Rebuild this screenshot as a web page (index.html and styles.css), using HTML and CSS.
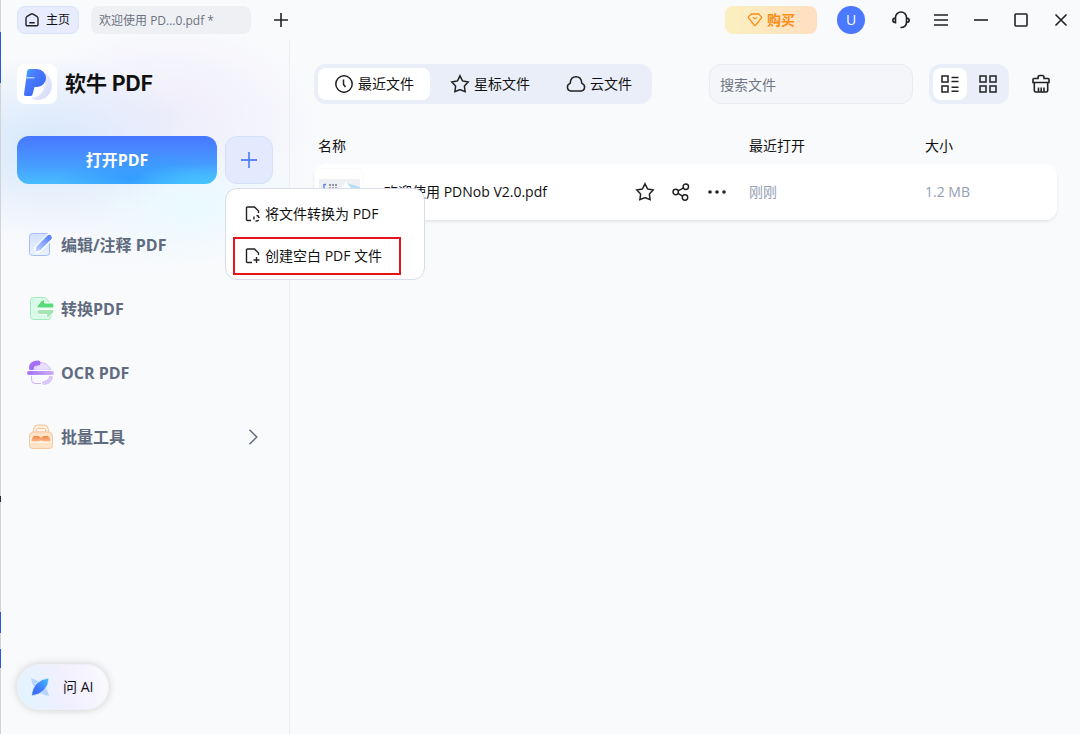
FILE: index.html
```html
<!DOCTYPE html>
<html lang="zh-CN">
<head>
<meta charset="utf-8">
<title>软牛 PDF</title>
<link rel="stylesheet" href="styles.css">
</head>
<body>
<svg class="defs" width="0" height="0" aria-hidden="true">
  <defs>
    <linearGradient id="g-blue" x1="1" y1="0" x2="0" y2="1"><stop offset="0" stop-color="#4a78ff"/><stop offset="1" stop-color="#c3d4ff"/></linearGradient>
    <linearGradient id="g-bluebox" x1="0" y1="0" x2="0" y2="1"><stop offset="0" stop-color="#d3e1fb"/><stop offset="1" stop-color="#eaf2ff"/></linearGradient>
    <linearGradient id="g-purple" x1="0" y1="0" x2="1" y2="0"><stop offset="0" stop-color="#a672f8"/><stop offset="1" stop-color="#cdb0fb"/></linearGradient>
    <linearGradient id="g-logo" x1="0" y1="0" x2="1" y2="1"><stop offset="0" stop-color="#35b4ff"/><stop offset=".3" stop-color="#4a7cff"/><stop offset="1" stop-color="#3560ee"/></linearGradient>
    <linearGradient id="g-logo-back" x1="0" y1="0" x2="1" y2="1"><stop offset="0" stop-color="#f4f5ff"/><stop offset="1" stop-color="#d2d8fb"/></linearGradient>
    <linearGradient id="g-leaf" x1="1" y1="0" x2="0" y2="1"><stop offset="0" stop-color="#45c2ff"/><stop offset=".6" stop-color="#3e78fb"/><stop offset="1" stop-color="#3d6cf5"/></linearGradient>
    <linearGradient id="g-orange" x1="0" y1="0" x2="0" y2="1"><stop offset="0" stop-color="#ef8444"/><stop offset="1" stop-color="#f9bd8e"/></linearGradient>
    <symbol id="i-star" viewBox="0 0 20 20"><path d="M10 1.8 12.4 6.6Q12.6 7 13 7.1L18.2 8 14.6 11.8Q14.3 12.1 14.4 12.5L15.1 17.6 10.4 15.8Q10 15.6 9.6 15.8L4.9 17.6 5.6 12.5Q5.700 12.1 5.4 11.8L1.800 8 7 7.100Q7.400 7 7.600 6.600Z"/></symbol>
  </defs>
</svg>
<div class="app">
  <header class="titlebar">
    <nav class="doc-tabs">
      <button class="doc-tab home" type="button">
        <svg width="14" height="14" viewBox="0 0 14 14"><path d="M1 5.200Q1 4.300 1.800 3.700L6 1.100Q7 .5 8 1.100L12.200 3.700Q13 4.300 13 5.200V11.600Q13 12.800 11.800 12.800H2.200Q1 12.800 1 11.600ZM4.300 9.700H9.700"/></svg>
        主页
      </button>
      <button class="doc-tab file" type="button">欢迎使用 PD...0.pdf *</button>
      <button class="icon-btn add" type="button" aria-label="新建标签"><svg width="14" height="14" viewBox="0 0 14 14"><path d="M7 0V14M0 7H14"/></svg></button>
    </nav>
    <button class="buy" type="button">
      <svg width="16" height="14" viewBox="0 0 16 14"><path d="M4.400 1H11.600L14.300 3.600Q15 4.400 14.300 5.200L8.600 12.200Q8 12.800 7.400 12.200L1.700 5.200Q1 4.400 1.700 3.600ZM5.800 4.500 8 5.500 10.200 4.500"/></svg>
      购买
    </button>
    <button class="avatar" type="button">U</button>
    <div class="window-actions">
      <button class="icon-btn" type="button" aria-label="客服"><svg width="18" height="18" viewBox="0 0 18 18"><path d="M3.500 8V6.500A5.500 5.500 0 0 1 14.500 6.500V11Q14.500 16.500 8.500 16.500M3.500 7Q.8 7.200 .8 9.300T3.500 11.600ZM14.500 7Q17.200 7.200 17.200 9.300T14.500 11.600Z"/></svg></button>
      <button class="icon-btn" type="button" aria-label="菜单"><svg width="14" height="14" viewBox="0 0 14 14"><path d="M0 2H14M0 7H14M0 12H14"/></svg></button>
      <button class="icon-btn" type="button" aria-label="最小化"><svg width="14" height="14" viewBox="0 0 14 14"><path d="M0 7H14"/></svg></button>
      <button class="icon-btn" type="button" aria-label="最大化"><svg width="14" height="14" viewBox="0 0 14 14"><rect x="1" y="1" width="12" height="12" rx="1"/></svg></button>
      <button class="icon-btn" type="button" aria-label="关闭"><svg width="14" height="14" viewBox="0 0 14 14"><path d="M1.500 1.500 12.500 12.500M12.500 1.500 1.500 12.500"/></svg></button>
    </div>
  </header>

  <aside class="sidebar">
    <div class="brand">
      <span class="logo"><svg width="40" height="40" viewBox="0 0 40 40"><path d="M28 9A13 13.500 0 1 1 14 34Q25 33 28 22Z" fill="url(#g-logo-back)"/><path d="M12.500 5H20A9 9 0 0 1 20 23H17.500L15.500 30.500Q15 32 13 32H8.500Q6.600 32 7 30L9.200 14.500 10 7.500Q10.400 5 12.500 5Z" fill="url(#g-logo)"/><path d="M9 13.800H17.500" stroke="#c9e2ff" stroke-width="1.200"/></svg></span>
      <h1>软牛 PDF</h1>
    </div>
    <div class="open-row">
      <button class="open" type="button">打开PDF</button>
      <div class="create">
        <button class="create-btn" type="button" aria-label="新建"><svg width="16" height="16" viewBox="0 0 16 16"><path d="M8 0V16M0 8H16"/></svg></button>
        <div class="menu">
          <button type="button"><svg width="16" height="16" viewBox="0 0 16 16"><path d="M6 14.500H2.500Q1.500 14.500 1.500 13.500V2Q1.500 1 2.500 1H9.500L13.500 5V7"/><path d="M11.500 9.500Q13.700 9.500 14 12M9.300 10.500Q8.500 12 9.200 13.500M13.700 14Q12 15.500 10.500 14.800"/></svg>将文件转换为 PDF</button>
          <button class="marked" type="button"><svg width="16" height="16" viewBox="0 0 16 16"><path d="M7 14.500H2.500Q1.500 14.500 1.500 13.500V2Q1.500 1 2.500 1H9.500L13.500 5V7M11.500 9V15M8.500 12H14.500"/></svg>创建空白 PDF 文件</button>
        </div>
      </div>
    </div>
    <nav class="tools">
      <a href="#edit"><svg width="28" height="28" viewBox="0 0 28 28"><rect x="2.500" y="2.500" width="20" height="22" rx="3" fill="url(#g-bluebox)" stroke="#a5bdf4"/><path d="M11 18 23 6" stroke="#fff" stroke-width="8" stroke-linecap="round"/><path d="M8.500 20.500 9.500 15.500 20.500 4.500Q22 3 24 4.700 25.800 6.500 24.200 8.200L13.500 19Z" fill="url(#g-blue)"/></svg>编辑/注释 PDF</a>
      <a href="#convert"><svg width="28" height="28" viewBox="0 0 28 28"><path d="M6.500 2.500H18L24 8.500V22Q24 24.500 21.500 24.500H6.500Q3.500 24.500 3.500 21.500V5.500Q3.500 2.500 6.500 2.500Z" fill="#d8fae8" stroke="#a4ebbe"/><path d="M10.500 10.500 14.500 5.500Q17 3.500 17.500 6V8H25.500Q27 8 27 10.500T25.500 13H12Q9 13 10.500 10.500Z" fill="#58da79" stroke="#fff"/><path d="M26 14.500H12Q9.800 14.500 9.800 17T12 19.500H19.500V21.500Q20 24 22.500 22L26.500 17.500Q28 15 26 14.500Z" fill="#a3e6b4" stroke="#fff"/></svg>转换PDF</a>
      <a href="#ocr"><svg width="28" height="28" viewBox="0 0 28 28"><path d="M12 3.500Q21 3 24 11H7Z" fill="#eadfff" stroke="#d6c2fb"/><path d="M4.500 17V20.500Q4.500 24.500 8 24.500H14" fill="#faf7ff" stroke="#cdb5f8"/><path d="M17 24Q23 23 24 18" stroke="#fff" stroke-width="6" stroke-linecap="round"/><path d="M17 24Q23 23 24 18" stroke="#dbc8fb" stroke-width="4" stroke-linecap="round"/><path d="M4.500 9Q4.500 4 11 4" stroke="#a56ff8" stroke-width="5" stroke-linecap="round"/><rect x="-.5" y="11.500" width="28" height="5" rx="2.500" fill="url(#g-purple)" stroke="#fff"/></svg>OCR PDF</a>
      <a href="#batch"><svg width="28" height="28" viewBox="0 0 28 28"><path d="M6 9 7 5Q7.500 2 10.500 2H17.500Q20.500 2 21 5L22 9" fill="#ffedd9" stroke="#f3c49c"/><rect x="9.500" y="5.500" width="9" height="3.500" rx="1" fill="#fff6ec" stroke="#f3c49c"/><path d="M2.500 13Q2.500 9.500 7 9H21Q25.500 9.500 25.500 13V22.500Q25.500 25.500 22.500 25.500H5.500Q2.500 25.500 2.500 22.500Z" fill="#ffe3c7" stroke="#f5c8a3"/><path d="M3 15H25V20H3Z" fill="#fff4e8"/><path d="M4.500 16.500 7 13H11.500L14 15 16.500 13H21L23.500 16.500V18.500H16.500L14 17.500 11.500 18.500H4.500Z" fill="url(#g-orange)"/></svg>批量工具<svg class="chev" width="10" height="18" viewBox="0 0 10 18"><path d="M1.500 1.800 8.800 9 1.500 16.200"/></svg></a>
    </nav>
    <button class="ask-ai" type="button"><svg width="20" height="20" viewBox="0 0 20 20"><path d="M1 1Q8 3 14 8 18 13 19 19 10 17 6 13 2 8 1 1Z" fill="#b7d5ff"/><path d="M19 1Q19 8 14 13.500 9 18 1.500 19 2 11 7 6 12 1.500 19 1Z" fill="url(#g-leaf)" stroke="#eef6ff" stroke-width=".8"/></svg>问 AI</button>
  </aside>

  <main class="main">
    <div class="toolbar">
      <nav class="filters">
        <button class="active" type="button"><svg width="20" height="20" viewBox="0 0 20 20"><circle cx="10" cy="10" r="8.200"/><path d="M9.500 5.500V10.500L11.500 13"/></svg>最近文件</button>
        <button type="button"><svg width="20" height="20"><use href="#i-star"/></svg>星标文件</button>
        <button type="button"><svg width="20" height="20" viewBox="0 0 20 20"><path d="M4.800 17A3.900 3.900 0 0 1 4.200 9.400Q4.500 2.800 10 2.800T15.800 9.400A3.900 3.900 0 0 1 15.200 17Z"/></svg>云文件</button>
      </nav>
      <input class="search" type="search" placeholder="搜索文件" aria-label="搜索文件">
      <div class="views">
        <button class="active" type="button" aria-label="列表视图"><svg width="20" height="20" viewBox="0 0 20 20"><path d="M2 2H8V8H2ZM2 12H8V18H2ZM11.500 3.500H18.500M11.500 7.500H18.500M11.500 13.200H18.500M11.500 17.200H18.500"/></svg></button>
        <button type="button" aria-label="网格视图"><svg width="20" height="20" viewBox="0 0 20 20"><path d="M2 2H8V8H2ZM12 2H18V8H12ZM2 12H8V18H2ZM12 12H18V18H12Z"/></svg></button>
      </div>
      <button class="icon-btn trash" type="button" aria-label="清空"><svg width="20" height="20" viewBox="0 0 20 20"><path d="M7 4.500V3.500Q7 1.500 9 1.500H11Q13 1.500 13 3.500V4.500H17Q18 4.500 18 5.500V8.500H2V5.500Q2 4.500 3 4.500ZM3.300 8.500V16.500Q3.300 18 4.800 18H15.200Q16.700 18 16.700 16.500V8.500M7.500 13.500V18M10.200 13.500V18M13 13.500V18"/></svg></button>
    </div>
    <table class="files">
      <colgroup><col><col class="c-actions"><col class="c-date"><col class="c-size"></colgroup>
      <thead><tr><th colspan="2" class="name-head">名称</th><th>最近打开</th><th>大小</th></tr></thead>
      <tbody>
        <tr>
          <td><div class="file-name"><svg width="50" height="48" viewBox="0 0 50 48"><rect x=".5" y=".5" width="49" height="47" rx="8" fill="#fff" stroke="#fafafc"/><rect x="5" y="11" width="41" height="26" fill="#eef0f6"/><path d="M10 16V20M10 16.500H12" stroke="#5b84ec" stroke-width="1.500"/><path d="M15 17H24" stroke="#777" stroke-width="1.500" stroke-dasharray="2 1"/><path d="M15 19.500H23" stroke="#aaa" stroke-dasharray="2 1"/><path d="M28 22 32 15 36 16 46 19V30H28Z" fill="#b6def5"/><path d="M28 20 32 14 37 20Z" fill="#fff"/></svg><span>欢迎使用 PDNob V2.0.pdf</span></div></td>
          <td><div class="row-actions">
            <button type="button" aria-label="星标"><svg width="20" height="20"><use href="#i-star"/></svg></button>
            <button type="button" aria-label="分享"><svg width="20" height="20" viewBox="0 0 20 20"><circle cx="4.700" cy="10" r="2.700"/><circle cx="14.800" cy="4.800" r="2.700"/><circle cx="14" cy="15.500" r="2.700"/><path d="M7 8.800 12.300 6.100M7 11.300 11.600 14.200"/></svg></button>
            <button type="button" aria-label="更多"><svg class="dots" width="20" height="20" viewBox="0 0 20 20"><circle cx="3" cy="10" r="1.800"/><circle cx="10" cy="10" r="1.800"/><circle cx="17" cy="10" r="1.800"/></svg></button>
          </div></td>
          <td class="muted">刚刚</td>
          <td class="muted">1.2 MB</td>
        </tr>
      </tbody>
    </table>
  </main>
</div>
</body>
</html>
```

FILE: styles.css
```css
* { box-sizing: border-box; }

body {
  margin: 0;
  font: 14px/20px "Open Sans", "Noto Sans CJK SC", sans-serif;
  color: #111;
  background: #f9fafc;
}

button, input {
  margin: 0;
  padding: 0;
  border: 0;
  background: none;
  font: inherit;
  color: inherit;
}

svg {
  flex: none;
  fill: none;
}

.defs { position: absolute; }

.app {
  display: grid;
  grid-template: 40px 1fr / 290px 1fr;
  min-height: 100vh;
  background:
    linear-gradient(#d2d3d6, #d2d3d6) 0 0 / 1px 100% no-repeat,
    radial-gradient(ellipse 150px 90px at 40px 145px, #cfe4fbcc, #cfe4fb00),
    radial-gradient(ellipse 120px 60px at 190px 205px, #e6fcffbb, #e6fcff00),
    radial-gradient(ellipse 150px 90px at 170px 115px, #ece8fbaa, #ece8fb00),
    radial-gradient(ellipse 200px 120px at 130px 160px, #eef3fdcc, #eef3fd00),
    #f9fafc;
}

/* Edge of the window that lies behind */
.app::before {
  content: "";
  position: absolute;
  left: 0;
  top: 0;
  width: 1px;
  height: 668px;
  background:
    linear-gradient(#2858e0, #2858e0) 0 32px / 1px 51px no-repeat,
    linear-gradient(#222a40, #222a40) 0 496px / 1px 6px no-repeat,
    linear-gradient(#2858e0, #2858e0) 0 612px / 1px 21px no-repeat,
    linear-gradient(#2858e0, #2858e0) 0 649px / 1px 19px no-repeat;
}

/* Title bar */
.titlebar {
  grid-column: 1 / -1;
  display: flex;
  align-items: center;
  padding-left: 17px;
}

.doc-tabs {
  display: flex;
  align-items: center;
  flex: 1;
}

.doc-tab {
  height: 28px;
  border-radius: 8px;
  font-size: 12px;
  text-align: left;
}

.home {
  display: flex;
  align-items: center;
  gap: 7px;
  padding: 0 8px 0 7px;
  margin-right: 12px;
  border: 1px solid #d9e2fb;
  background: #e7edfe;
}

.home svg { stroke: #222; stroke-width: 1.4; }

.file {
  width: 160px;
  padding: 2px 8px 0;
  background: #eff0f4;
  color: #6b7280;
}

.icon-btn {
  display: flex;
  align-items: center;
  justify-content: center;
  width: 38px;
  height: 28px;
}

.icon-btn svg { stroke: #222; stroke-width: 1.6; }
.add { margin-left: 11px; }

.buy {
  display: flex;
  align-items: center;
  justify-content: center;
  gap: 4px;
  width: 92px;
  height: 28px;
  margin-right: 20px;
  border-radius: 8px;
  background: linear-gradient(90deg, #fbf0bf, #ffdfc2);
  color: #fa8c16;
  font-weight: 600;
}

.buy svg { stroke: #fa8c16; stroke-width: 1.3; }

.avatar {
  width: 28px;
  height: 28px;
  margin-right: 17px;
  border-radius: 50%;
  background: #4a78ff;
  color: #fff;
}

.window-actions { display: flex; gap: 2px; }

/* Sidebar */
.sidebar {
  display: flex;
  flex-direction: column;
  padding: 24px 16px 24px 17px;
  border-right: 1px solid #ebedf2;
}

.brand {
  display: flex;
  align-items: center;
  gap: 8px;
  margin-bottom: 32px;
}

.logo {
  width: 40px;
  height: 40px;
  border-radius: 8px;
  background: #fff;
}

.brand h1 {
  margin: 0;
  font: 700 21px/40px Inter, "Noto Sans CJK SC", sans-serif;
}

.open-row { display: flex; gap: 8px; }

.open {
  flex: 1;
  height: 48px;
  border-radius: 12px;
  background:
    radial-gradient(ellipse 70px 20px at 90% 100%, #46c2ff, #46c2ff00),
    radial-gradient(ellipse 80px 28px at 60% 90%, #2f96ffcc, #2f96ff00),
    linear-gradient(#4877ff, #4699ff 55%, #48bcff);
  color: #fff;
  font-size: 16px;
  font-weight: 700;
}

.create { position: relative; }

.create-btn {
  display: flex;
  align-items: center;
  justify-content: center;
  width: 48px;
  height: 48px;
  border: 1px solid #d5e0fb;
  border-radius: 12px;
  background: #e3eafd;
}

.create-btn svg { stroke: #5c87ff; stroke-width: 1.8; }

.menu {
  position: absolute;
  z-index: 2;
  top: 52px;
  left: 0;
  display: flex;
  flex-direction: column;
  align-items: flex-start;
  gap: 4px;
  width: 200px;
  padding: 6px 7px 4px;
  border: 1px solid #d9dcea;
  border-radius: 12px;
  background: #fff;
}

.menu button {
  display: flex;
  align-items: center;
  gap: 4px;
  height: 38px;
  padding: 0 17px 0 10px;
  border: 2px solid transparent;
  white-space: nowrap;
}

.menu svg { stroke: #222; stroke-width: 1.4; }
.menu .marked { border-color: #e8141c; }

.tools {
  display: flex;
  flex-direction: column;
  gap: 16px;
  margin-top: 37px;
}

.tools a {
  display: flex;
  align-items: center;
  gap: 6px;
  height: 48px;
  padding: 0 15px 0 10px;
  color: #606b7f;
  font-size: 16px;
  font-weight: 700;
  text-decoration: none;
}

.chev {
  margin-left: auto;
  stroke: #606b7f;
  stroke-width: 1.5;
}

.ask-ai {
  display: flex;
  align-items: center;
  align-self: flex-start;
  gap: 13px;
  height: 46px;
  margin-top: auto;
  padding: 0 15px 0 12px;
  border: 1px solid #eef0f6;
  border-radius: 23px;
  background: linear-gradient(70deg, #dff5ff, #f1effe 50%, #fbfaff);
  box-shadow: 0 0 8px #0000002e;
}

/* File list */
.main { padding: 24px 23px 24px 24px; }

.toolbar { display: flex; align-items: center; }

.filters, .views {
  display: flex;
  padding: 4px;
  border-radius: 12px;
  background: #eaeef9;
}

.filters { gap: 4px; margin-right: auto; }

.filters button {
  display: flex;
  align-items: center;
  gap: 4px;
  height: 32px;
  padding: 0 16px;
  border-radius: 8px;
}

.filters .active, .views .active { background: #fff; }

.filters svg, .views svg, .row-actions svg { stroke: #222; stroke-width: 1.5; }

.search {
  width: 204px;
  height: 40px;
  margin-right: 16px;
  padding: 0 10px;
  border: 1px solid #e9ebf3;
  border-radius: 12px;
  background: #f5f6fa;
}

.search::placeholder { color: #707684; opacity: 1; }

.views { gap: 4px; margin-right: 13px; }

.views button {
  display: flex;
  align-items: center;
  justify-content: center;
  width: 34px;
  height: 32px;
  border-radius: 8px;
}

.trash { margin-right: -3px; }

.files {
  width: 100%;
  margin-top: 28px;
  border-spacing: 0;
  table-layout: fixed;
}

.c-actions { width: 114px; }
.c-date { width: 176px; }
.c-size { width: 132px; }

.files th {
  height: 32px;
  padding: 0 0 4px;
  font-weight: 400;
  text-align: left;
}

.files .name-head { padding-left: 4px; }

.files tbody tr {
  border-radius: 12px;
  box-shadow: 0 2px 3px #00000014;
}

.files td {
  height: 56px;
  padding: 0;
  background: #fff;
}

.files td:first-child { border-radius: 12px 0 0 12px; }
.files td:last-child { border-radius: 0 12px 12px 0; }

.file-name {
  display: flex;
  align-items: center;
  gap: 20px;
  white-space: nowrap;
}

.row-actions { display: flex; gap: 16px; }
.row-actions button { display: flex; }
.row-actions .dots { fill: #222; stroke: none; }
.files .muted { color: #94a0b3; }
```
